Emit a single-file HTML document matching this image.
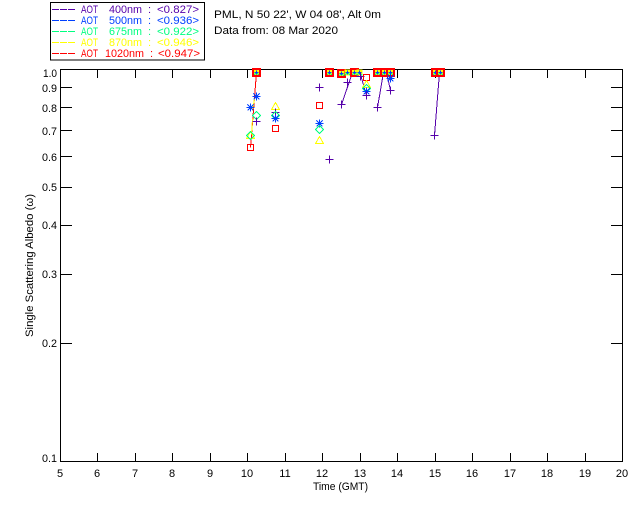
<!DOCTYPE html>
<html>
<head>
<meta charset="utf-8">
<style>
html,body{margin:0;padding:0;background:#fff;}
svg{display:block;}
text{font-family:"Liberation Sans",sans-serif;font-size:11px;fill:#000;}
.c{text-anchor:middle;}
</style>
</head>
<body>
<svg width="640" height="512" viewBox="0 0 640 512" xmlns="http://www.w3.org/2000/svg">
<defs>
<path id="p" d="M-4 0H4M0 -4V4" stroke="#5500aa" fill="none"/>
<path id="b" d="M-4 0H4M0 -4V4M-3 -3L3 3M-3 3L3 -3" stroke="#0040ff" fill="none"/>
<path id="g" d="M0 -4L4 0L0 4L-4 0Z" stroke="#00ff80" fill="none"/>
<path id="y" d="M0 -4L4 3H-4Z" stroke="#ffff00" fill="none"/>
<rect id="r" x="-3" y="-3" width="6" height="6" stroke="#ff0000" fill="none"/>
<g id="s">
<rect x="-3" y="-3" width="6" height="6" fill="#ffff00"/>
<path d="M-3 3L0 0L3 3" stroke="#00ff80" fill="none"/>
<path d="M-2 0H2M0 -2V2" stroke="#0040ff" fill="none"/>
</g>
<g id="t">
<use href="#s"/>
<rect x="-4" y="-4" width="8" height="8" stroke="#ff0000" stroke-width="1" fill="none"/>
<rect x="-3" y="-3" width="6" height="6" stroke="#ff0000" stroke-width="1" fill="none"/>
</g>
</defs>
<rect width="640" height="512" fill="#fff"/>

<g shape-rendering="crispEdges">
<!-- legend box -->
<rect x="50.500" y="2.500" width="154" height="57.500" fill="none" stroke="#000"/>
<path d="M52 9.500H75" stroke="#5500aa" stroke-dasharray="7 1"/>
<path d="M52 20.500H75" stroke="#0040ff" stroke-dasharray="7 1"/>
<path d="M52 31.500H75" stroke="#00ff80" stroke-dasharray="7 1"/>
<path d="M52 42.500H75" stroke="#ffff00" stroke-dasharray="7 1"/>
<path d="M52 53.500H75" stroke="#ff0000" stroke-dasharray="7 1"/>

<!-- axes -->
<rect x="60.500" y="69.500" width="562" height="392" fill="none" stroke="#000"/>
<path stroke="#000" fill="none" d="
M97.500 69V78M135.500 69V78M172.500 69V78M210.500 69V78M247.500 69V78M285.500 69V78M322.500 69V78M360.500 69V78M397.500 69V78M435.500 69V78M472.500 69V78M510.500 69V78M547.500 69V78M585.500 69V78
M97.500 453V461M135.500 453V461M172.500 453V461M210.500 453V461M247.500 453V461M285.500 453V461M322.500 453V461M360.500 453V461M397.500 453V461M435.500 453V461M472.500 453V461M510.500 453V461M547.500 453V461M585.500 453V461
M60 87.500H72M60 107.500H72M60 130.500H72M60 156.500H72M60 187.500H72M60 225.500H72M60 274.500H72M60 343.500H72
M611 87.500H622M611 107.500H622M611 130.500H622M611 156.500H622M611 187.500H622M611 225.500H622M611 274.500H622M611 343.500H622"/>

<g transform="translate(0.5 0.5)">
<!-- data lines -->
<path d="M250 147L256 72" stroke="#ff0000" fill="none"/>
<path d="M251 134L252 118" stroke="#ffff00" fill="none"/>
<path d="M252 110L254 98" stroke="#ffff00" fill="none"/>
<path d="M341 104L352 72" stroke="#5500aa" fill="none"/>
<path d="M360 74L366 95" stroke="#5500aa" fill="none"/>
<path d="M377 107L383 72" stroke="#5500aa" fill="none"/>
<path d="M386 72L390 90" stroke="#5500aa" fill="none"/>
<path d="M434 135L439 72" stroke="#5500aa" fill="none"/>

<!-- markers -->
<use href="#r" x="250" y="147"/>
<use href="#y" x="250" y="135"/>
<use href="#g" x="250" y="135"/>
<use href="#b" x="250" y="107"/>
<use href="#b" x="256" y="96"/>
<use href="#g" x="256" y="115"/>
<use href="#p" x="256" y="121"/>
<use href="#t" x="256" y="72"/>
<use href="#y" x="275" y="106"/>
<use href="#p" x="275" y="112"/>
<use href="#g" x="275" y="115"/>
<use href="#b" x="275" y="118"/>
<use href="#r" x="275" y="128"/>
<use href="#p" x="319" y="87"/>
<use href="#r" x="319" y="105"/>
<use href="#b" x="319" y="123"/>
<use href="#g" x="319" y="129"/>
<use href="#y" x="319" y="140"/>
<use href="#p" x="329" y="159"/>
<use href="#t" x="329" y="72"/>
<use href="#t" x="341" y="73"/>
<use href="#s" x="347" y="72"/>
<use href="#t" x="354" y="72"/>
<use href="#s" x="359" y="72"/>
<use href="#p" x="341" y="104"/>
<use href="#p" x="347" y="82"/>
<use href="#p" x="360" y="76"/>
<use href="#r" x="366" y="77"/>
<use href="#y" x="366" y="84"/>
<use href="#g" x="366" y="88"/>
<use href="#b" x="366" y="91"/>
<use href="#p" x="366" y="95"/>
<use href="#t" x="377" y="72"/>
<use href="#t" x="384" y="72"/>
<use href="#t" x="390" y="72"/>
<use href="#b" x="390" y="78"/>
<use href="#p" x="390" y="90"/>
<use href="#p" x="377" y="107"/>
<use href="#p" x="434" y="135"/>
<use href="#t" x="435" y="72"/>
<use href="#t" x="440" y="72"/>
</g>
</g>

<!-- legend text -->
<g>
<text x="81" y="13" style="fill:#5500aa" textLength="17" lengthAdjust="spacingAndGlyphs">AOT</text>
<text x="109" y="13" style="fill:#5500aa" textLength="33" lengthAdjust="spacingAndGlyphs">400nm</text>
<text x="148" y="13" style="fill:#5500aa">:</text>
<text x="157" y="13" style="fill:#5500aa" textLength="42" lengthAdjust="spacingAndGlyphs">&lt;0.827&gt;</text>

<text x="81" y="24" style="fill:#0040ff" textLength="17" lengthAdjust="spacingAndGlyphs">AOT</text>
<text x="109" y="24" style="fill:#0040ff" textLength="33" lengthAdjust="spacingAndGlyphs">500nm</text>
<text x="148" y="24" style="fill:#0040ff">:</text>
<text x="157" y="24" style="fill:#0040ff" textLength="42" lengthAdjust="spacingAndGlyphs">&lt;0.936&gt;</text>

<text x="81" y="35" style="fill:#00ff80" textLength="17" lengthAdjust="spacingAndGlyphs">AOT</text>
<text x="109" y="35" style="fill:#00ff80" textLength="33" lengthAdjust="spacingAndGlyphs">675nm</text>
<text x="148" y="35" style="fill:#00ff80">:</text>
<text x="157" y="35" style="fill:#00ff80" textLength="42" lengthAdjust="spacingAndGlyphs">&lt;0.922&gt;</text>

<text x="81" y="46" style="fill:#ffff00" textLength="17" lengthAdjust="spacingAndGlyphs">AOT</text>
<text x="109" y="46" style="fill:#ffff00" textLength="33" lengthAdjust="spacingAndGlyphs">870nm</text>
<text x="148" y="46" style="fill:#ffff00">:</text>
<text x="157" y="46" style="fill:#ffff00" textLength="42" lengthAdjust="spacingAndGlyphs">&lt;0.946&gt;</text>

<text x="81" y="57" style="fill:#ff0000" textLength="17" lengthAdjust="spacingAndGlyphs">AOT</text>
<text x="105" y="57" style="fill:#ff0000" textLength="39" lengthAdjust="spacingAndGlyphs">1020nm</text>
<text x="150" y="57" style="fill:#ff0000">:</text>
<text x="158" y="57" style="fill:#ff0000" textLength="42" lengthAdjust="spacingAndGlyphs">&lt;0.947&gt;</text>
</g>

<!-- title -->
<text x="214" y="18" textLength="167" lengthAdjust="spacingAndGlyphs">PML, N 50 22', W 04 08', Alt 0m</text>
<text x="214" y="34" textLength="124" lengthAdjust="spacingAndGlyphs">Data from: 08 Mar 2020</text>

<!-- y labels -->
<text x="43" y="77" textLength="14" lengthAdjust="spacingAndGlyphs">1.0</text>
<text x="42" y="92" textLength="15" lengthAdjust="spacingAndGlyphs">0.9</text>
<text x="42" y="112" textLength="15" lengthAdjust="spacingAndGlyphs">0.8</text>
<text x="42" y="135" textLength="15" lengthAdjust="spacingAndGlyphs">0.7</text>
<text x="42" y="161" textLength="15" lengthAdjust="spacingAndGlyphs">0.6</text>
<text x="42" y="191" textLength="15" lengthAdjust="spacingAndGlyphs">0.5</text>
<text x="42" y="229" textLength="15" lengthAdjust="spacingAndGlyphs">0.4</text>
<text x="42" y="278" textLength="15" lengthAdjust="spacingAndGlyphs">0.3</text>
<text x="42" y="347" textLength="15" lengthAdjust="spacingAndGlyphs">0.2</text>
<text x="42" y="462" textLength="15" lengthAdjust="spacingAndGlyphs">0.1</text>

<!-- x labels -->
<text class="c" x="60" y="477">5</text>
<text class="c" x="97" y="477">6</text>
<text class="c" x="135" y="477">7</text>
<text class="c" x="172" y="477">8</text>
<text class="c" x="210" y="477">9</text>
<text class="c" x="247" y="477">10</text>
<text class="c" x="285" y="477">11</text>
<text class="c" x="322" y="477">12</text>
<text class="c" x="360" y="477">13</text>
<text class="c" x="397" y="477">14</text>
<text class="c" x="435" y="477">15</text>
<text class="c" x="472" y="477">16</text>
<text class="c" x="510" y="477">17</text>
<text class="c" x="547" y="477">18</text>
<text class="c" x="585" y="477">19</text>
<text class="c" x="622" y="477">20</text>

<text x="313" y="490" textLength="55" lengthAdjust="spacingAndGlyphs">Time (GMT)</text>
<text transform="translate(33 337) rotate(-90)" textLength="143" lengthAdjust="spacingAndGlyphs">Single Scattering Albedo (ω)</text>
</svg>
</body>
</html>
